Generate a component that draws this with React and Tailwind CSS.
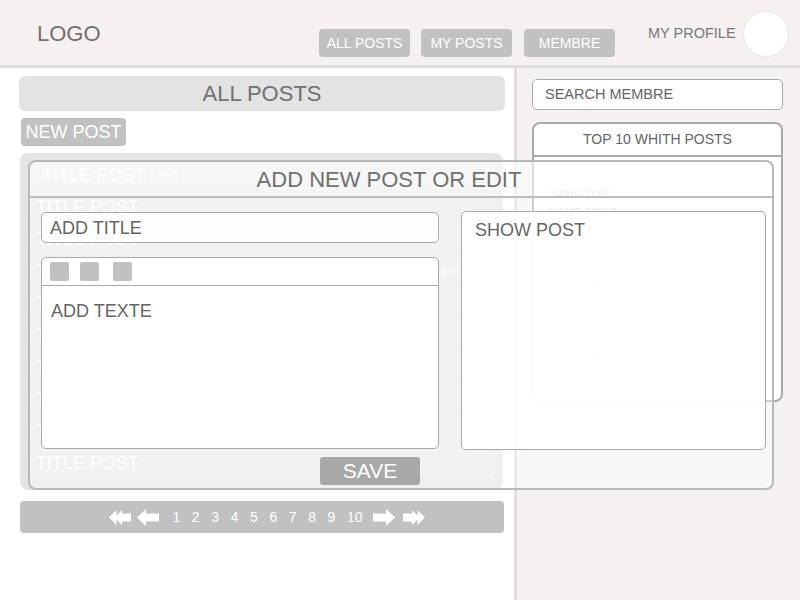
import React from "react";

function ArrowLeft() {
  return (
    <svg width="22" height="17" viewBox="0 0 22 17">
      <path d="M0 8.5 L9 0 V4.5 H22 V12.5 H9 V17 Z" fill="white" />
    </svg>
  );
}
function ArrowDoubleLeft() {
  return (
    <svg width="22" height="17" viewBox="0 0 22 17">
      <path d="M0 8.5 L7.5 1 V16 Z M5.5 8.5 L13 1 V4.5 H22 V12.5 H13 V16 Z" fill="white" />
    </svg>
  );
}

const navBtn =
  "w-[91px] h-[28px] rounded-[4px] bg-[#c1c1c1] text-white text-[14px] flex items-center justify-center";

export default function App() {
  const rows = Array.from({ length: 10 });
  const names = Array.from({ length: 10 }, (_, i) => `NAME TOP ${i + 1}`);
  return (
    <div className="relative w-[800px] h-[600px] overflow-hidden bg-white font-['Liberation_Sans',Arial,sans-serif]">
      {/* Header */}
      <header className="h-[68px] bg-[#f4f1f0] border-b-[3px] border-[#dedede] flex items-start">
        <div className="w-[319px] pl-[37px] pt-[21px] text-[22px] leading-[26px] text-[#707070]">LOGO</div>
        <nav className="pt-[29px] flex">
          <div className={navBtn}>ALL POSTS</div>
          <div className={navBtn + " ml-[11px]"}>MY POSTS</div>
          <div className={navBtn + " ml-[12px]"}>MEMBRE</div>
        </nav>
        <div className="ml-[33px] pt-[25px] text-[14.5px] leading-[17px] text-[#777]">MY PROFILE</div>
        <div className="ml-[7px] mt-[11px] w-[46px] h-[46px] rounded-full bg-white border border-[#e6e6e6]" />
      </header>

      {/* Main */}
      <div className="flex h-[532px]">
        <div className="w-[514px] bg-white pl-[19px] pt-[8px]">
          <div className="w-[486px] h-[35px] rounded-[6px] bg-[#e3e3e3] text-[22px] text-[#707070] flex items-center justify-center">
            ALL POSTS
          </div>
          <div className="mt-[7px] ml-[2px] w-[105px] h-[28px] rounded-[4px] bg-[#c1c1c1] text-white text-[18px] flex items-center justify-center">
            NEW POST
          </div>
          <div className="mt-[7px] ml-[1px] w-[483px] h-[337px] rounded-[8px] bg-[#e4e4e4] pt-[8px] pl-[10px] pr-[9px] flex flex-col gap-[4px]">
            {rows.map((_, i) => (
              <div
                key={i}
                className="h-[28px] rounded-[4px] bg-[#e9e9e9] border border-[#efefef] flex items-center pl-[5px] pr-[32px]"
              >
                <span className={"text-[18px] text-white" + (i === 0 ? " ml-[6px]" : "")}>TITLE POST</span>
                {i === 0 && <span className="ml-[4px] text-[10px] text-white">(LINK)</span>}
                {i === 3 && <span className="ml-auto text-[10px] text-white">DELETE</span>}
              </div>
            ))}
          </div>
          <div className="mt-[11px] ml-[1px] w-[484px] h-[32px] rounded-[4px] bg-[#c1c1c1] flex items-center justify-center pl-[10px] text-white text-[14px]">
            <ArrowDoubleLeft />
            <div className="ml-[6px]"><ArrowLeft /></div>
            <div className="ml-[13px] flex gap-[11.6px]">
              {[1, 2, 3, 4, 5, 6, 7, 8, 9, 10].map((n) => (
                <span key={n}>{n}</span>
              ))}
            </div>
            <div className="ml-[10px] -scale-x-100"><ArrowLeft /></div>
            <div className="ml-[8px] -scale-x-100"><ArrowDoubleLeft /></div>
          </div>
        </div>
        <div className="w-[3px] bg-[#dedede]" />
        <div className="flex-1 bg-[#f4f1f0] pl-[15px] pt-[11px]">
          <div className="w-[251px] h-[31px] rounded-[5px] bg-white border border-[#aaa] flex items-center pl-[12px] text-[14.5px] text-[#666]">
            SEARCH MEMBRE
          </div>
          <div className="mt-[12px] w-[251px] h-[280px] rounded-[8px] border-2 border-[#aaa] bg-white overflow-hidden">
            <div className="h-[33px] border-b-2 border-[#aaa] flex items-center justify-center text-[14px] text-[#666]">
              TOP 10 WHITH POSTS
            </div>
            <div className="pl-[16px] pt-[28px] flex flex-col">
              {names.map((n) => (
                <div key={n} className="h-[18px] text-[11px] leading-[18px] text-[#dcdcdc]">{n}</div>
              ))}
            </div>
          </div>
        </div>
      </div>

      {/* Modal overlay */}
      <div className="absolute left-[28px] top-[160px] w-[746px] h-[330px] rounded-[8px] border-2 border-[#b8b8b8] bg-white/40 flex flex-col">
        <div className="h-[36px] border-b-2 border-[#bdbdbd] flex items-center justify-center pr-[24px] text-[22px] text-[#707070] bg-white/30 rounded-t-[6px]">
          ADD NEW POST OR EDIT
        </div>
        <div className="flex pl-[11px] pt-[13px]">
          <div className="w-[398px] flex flex-col">
            <div className="mt-[1px] h-[31px] rounded-[5px] border border-[#aaa] bg-white/90 flex items-center pl-[8px] pt-[2px] text-[18px] text-[#666]">
              ADD TITLE
            </div>
            <div className="mt-[14px] h-[192px] rounded-[5px] border border-[#aaa] bg-white/95 flex flex-col">
              <div className="h-[28px] border-b border-[#aaa] flex items-center pl-[8px]">
                <div className="w-[19px] h-[19px] rounded-[2px] bg-[#c1c1c1]" />
                <div className="ml-[11px] w-[19px] h-[19px] rounded-[2px] bg-[#c1c1c1]" />
                <div className="ml-[14px] w-[19px] h-[19px] rounded-[2px] bg-[#c1c1c1]" />
              </div>
              <div className="pl-[9px] pt-[15px] text-[18px] leading-[21px] text-[#666]">ADD TEXTE</div>
            </div>
          </div>
          <div className="ml-[22px] w-[305px] h-[239px] rounded-[5px] border border-[#aaa] bg-white/95 pl-[13px] pt-[8px] text-[18px] leading-[21px] text-[#666]">
            SHOW POST
          </div>
        </div>
        <div className="mt-[7px] ml-[290px] w-[100px] h-[28px] rounded-[3px] bg-[#a8a8a8] text-white text-[21px] flex items-center justify-center">
          SAVE
        </div>
      </div>
    </div>
  );
}
